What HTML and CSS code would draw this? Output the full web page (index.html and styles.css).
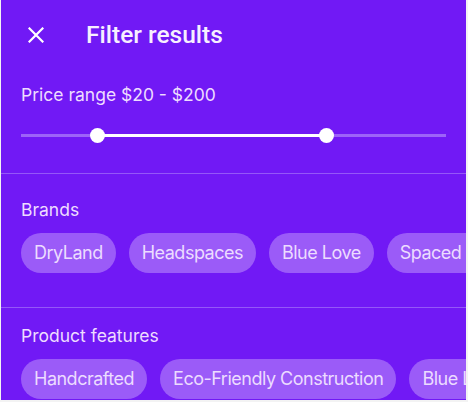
FILE: index.html
```html
<!DOCTYPE html>
<html lang="en">
<head>
<meta charset="utf-8">
<title>Filter results</title>
<link rel="stylesheet" href="styles.css">
</head>
<body>
<div class="panel">
  <header class="header">
    <button class="close" aria-label="Close">
      <svg width="16" height="16" viewBox="0 0 16 16"><path d="M1.5 1.5 L14.5 14.5 M14.5 1.5 L1.5 14.5" stroke="#fff" stroke-width="2.2" stroke-linecap="square" fill="none"/></svg>
    </button>
    <h1 class="title">Filter results</h1>
  </header>

  <section class="section price">
    <div class="label">Price range $20 - $200</div>
    <div class="slider">
      <div class="track"></div>
      <div class="active" style="left: 76px; width: 229px;"></div>
      <div class="thumb" style="left: 76px;"></div>
      <div class="thumb" style="left: 305px;"></div>
    </div>
  </section>

  <section class="section brands">
    <div class="label">Brands</div>
    <div class="chips">
      <span class="chip">DryLand</span>
      <span class="chip">Headspaces</span>
      <span class="chip">Blue Love</span>
      <span class="chip">Spaced Out</span>
    </div>
  </section>

  <section class="section features">
    <div class="label">Product features</div>
    <div class="chips">
      <span class="chip">Handcrafted</span>
      <span class="chip">Eco-Friendly Construction</span>
      <span class="chip">Blue Light Filter</span>
    </div>
  </section>
</div>
</body>
</html>
```

FILE: styles.css
```css
html, body {
  margin: 0;
  padding: 0;
  background: #f3f3f3;
}
body {
  width: 468px;
  height: 402px;
  overflow: hidden;
}
.panel {
  width: 465px;
  height: 400px;
  margin-left: 1px;
  background: #7119f5;
  overflow: hidden;
  font-family: Inter, "Noto Sans", sans-serif;
  color: #eedcff;
}
.header {
  height: 70px;
  display: flex;
  align-items: center;
}
.close {
  width: 70px;
  height: 70px;
  padding: 0;
  margin: 0;
  border: 0;
  background: none;
  display: flex;
  align-items: center;
  justify-content: center;
}
.close svg { display: block; }
.title {
  margin: -1px 0 0 15px;
  font-family: Roboto, "Liberation Sans", sans-serif;
  font-weight: 500;
  font-size: 24.5px;
  color: #f7efff;
  letter-spacing: 0;
}
.section {
  padding: 0 0 0 20px;
}
.label {
  font-size: 17.5px;
  line-height: 24px;
  height: 24px;
  white-space: nowrap;
}
.price {
  padding-top: 13px;
  padding-bottom: 24px;
  border-bottom: 1px solid #9557f8;
}
.slider {
  position: relative;
  margin-top: 14px;
  width: 425px;
  height: 28px;
}
.track {
  position: absolute;
  left: 0;
  right: 0;
  top: 13px;
  height: 3px;
  background: #9d63f8;
}
.active {
  position: absolute;
  top: 13px;
  height: 3px;
  background: #ffffff;
}
.thumb {
  position: absolute;
  top: 7px;
  width: 15px;
  height: 15px;
  margin-left: -7px;
  border-radius: 50%;
  background: #ffffff;
}
.brands {
  padding-top: 24px;
  padding-bottom: 34px;
  border-bottom: 1px solid #9557f8;
}
.features {
  padding-top: 16px;
}
.chips {
  display: flex;
  gap: 13px;
  margin-top: 11px;
  white-space: nowrap;
}
.chip {
  flex: none;
  height: 40px;
  line-height: 40px;
  padding: 0 13px;
  border-radius: 20px;
  background: #9b5bf8;
  color: #ecdcff;
  font-size: 18px;
  letter-spacing: -0.5px;
}
```
